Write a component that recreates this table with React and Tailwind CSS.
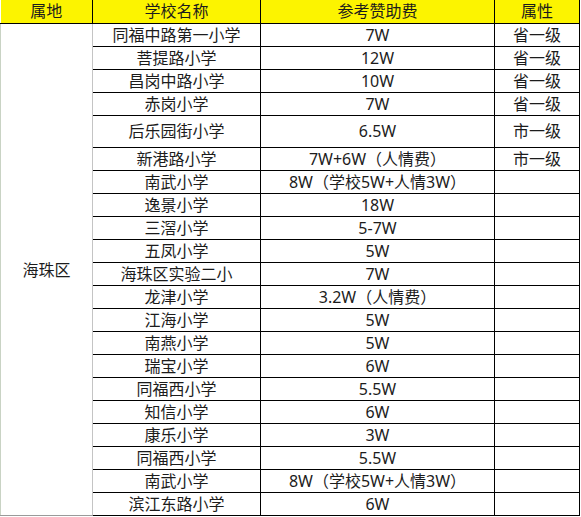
import React from "react";

const rows = [
  { name: "同福中路第一小学", fee: "7W", level: "省一级" },
  { name: "菩提路小学", fee: "12W", level: "省一级" },
  { name: "昌岗中路小学", fee: "10W", level: "省一级" },
  { name: "赤岗小学", fee: "7W", level: "省一级" },
  { name: "后乐园街小学", fee: "6.5W", level: "市一级", tall: true },
  { name: "新港路小学", fee: "7W+6W（人情费）", level: "市一级" },
  { name: "南武小学", fee: "8W（学校5W+人情3W）", level: "" },
  { name: "逸景小学", fee: "18W", level: "" },
  { name: "三滘小学", fee: "5-7W", level: "" },
  { name: "五凤小学", fee: "5W", level: "" },
  { name: "海珠区实验二小", fee: "7W", level: "" },
  { name: "龙津小学", fee: "3.2W（人情费）", level: "" },
  { name: "江海小学", fee: "5W", level: "" },
  { name: "南燕小学", fee: "5W", level: "" },
  { name: "瑞宝小学", fee: "6W", level: "" },
  { name: "同福西小学", fee: "5.5W", level: "" },
  { name: "知信小学", fee: "6W", level: "" },
  { name: "康乐小学", fee: "3W", level: "" },
  { name: "同福西小学", fee: "5.5W", level: "" },
  { name: "南武小学", fee: "8W（学校5W+人情3W）", level: "" },
  { name: "滨江东路小学", fee: "6W", level: "" },
];

const cell = "border border-black text-center p-0 leading-none";

export default function App() {
  return (
    <div
      className="w-[581px] h-[517px] bg-white text-[16px] text-[#1c1c1c]"
      style={{ fontFamily: '"Noto Sans", "Noto Sans CJK SC", sans-serif' }}
    >
      <table className="table-fixed border-collapse w-[579px]">
        <colgroup>
          <col className="w-[92px]" />
          <col className="w-[168px]" />
          <col className="w-[234px]" />
          <col className="w-[85px]" />
        </colgroup>
        <thead>
          <tr className="h-[23px] bg-[#fcf400]">
            <th className="border-b border-r border-black font-normal text-center p-0 leading-none">属地</th>
            <th className="border-b border-r border-black font-normal text-center p-0 leading-none">学校名称</th>
            <th className="border-b border-r border-black font-normal text-center p-0 leading-none">参考赞助费</th>
            <th className="border-b border-r border-black font-normal text-center p-0 leading-none">属性</th>
          </tr>
        </thead>
        <tbody>
          {rows.map((r, i) => (
            <tr key={i} className={r.tall ? "h-[32px]" : "h-[23px]"}>
              {i === 0 && (
                <td
                  rowSpan={rows.length}
                  className="border-l border-l-[#c9d3c4] border-r border-r-[#c4c4c4] border-b border-b-[#9a9a9a] text-center p-0 pt-[2px]"
                >
                  海珠区
                </td>
              )}
              <td className={cell}>{r.name}</td>
              <td className={cell}>{r.fee}</td>
              <td className={cell}>{r.level}</td>
            </tr>
          ))}
        </tbody>
      </table>
    </div>
  );
}
